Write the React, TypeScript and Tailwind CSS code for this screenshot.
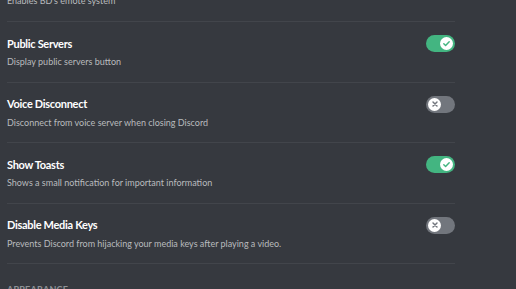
import React from 'react';

interface SettingRow {
  title: string;
  note: string;
  enabled: boolean;
}

const rows: SettingRow[] = [
  { title: 'Public Servers', note: 'Display public servers button', enabled: true },
  { title: 'Voice Disconnect', note: 'Disconnect from voice server when closing Discord', enabled: false },
  { title: 'Show Toasts', note: 'Shows a small notification for important information', enabled: true },
  { title: 'Disable Media Keys', note: 'Prevents Discord from hijacking your media keys after playing a video.', enabled: false },
];

function Toggle({ on }: { on: boolean }) {
  return (
    <div
      className={
        on
          ? 'w-[29px] h-[17px] rounded-full bg-[#43b581] flex items-center justify-end px-[2px]'
          : 'w-[29px] h-[17px] rounded-full bg-[#72767d] flex items-center justify-start px-[2px]'
      }
    >
      <div className="w-[13px] h-[13px] rounded-full bg-white flex items-center justify-center">
        {on ? (
          <svg width="9" height="9" viewBox="0 0 20 20">
            <path d="M4 10.5l4 4 8-8.5" fill="none" stroke="#43b581" strokeWidth="3.2" strokeLinecap="round" strokeLinejoin="round" />
          </svg>
        ) : (
          <svg width="8" height="8" viewBox="0 0 20 20">
            <path d="M5 5l10 10M15 5L5 15" fill="none" stroke="#72767d" strokeWidth="3.6" strokeLinecap="round" />
          </svg>
        )}
      </div>
    </div>
  );
}

export default function App() {
  return (
    <div className="w-[516px] h-[289px] overflow-hidden bg-[#36393f] pl-[7px] font-['Lato',sans-serif]">
      <div className="w-[448px]">
        <div className="h-[22px] flex items-end pb-[13px] border-b border-[#42454b]">
          <div className="text-[9px] leading-[14px] text-[#b9bbbe] whitespace-nowrap">Enables BD's emote system</div>
        </div>
        {rows.map((row) => (
          <div key={row.title} className="h-[60.5px] border-b border-[#42454b] flex flex-col justify-center">
            <div className="flex items-center justify-between pt-[1px]">
              <div className="text-[11px] leading-[16px] font-bold tracking-[-0.3px] text-white">{row.title}</div>
              <Toggle on={row.enabled} />
            </div>
            <div className="mt-[3px] text-[9px] leading-[14px] text-[#b9bbbe]">{row.note}</div>
          </div>
        ))}
        <div className="pt-[19px] text-[9px] leading-[14px] font-bold uppercase tracking-wide text-[#8e9297]">Appearance</div>
      </div>
    </div>
  );
}
